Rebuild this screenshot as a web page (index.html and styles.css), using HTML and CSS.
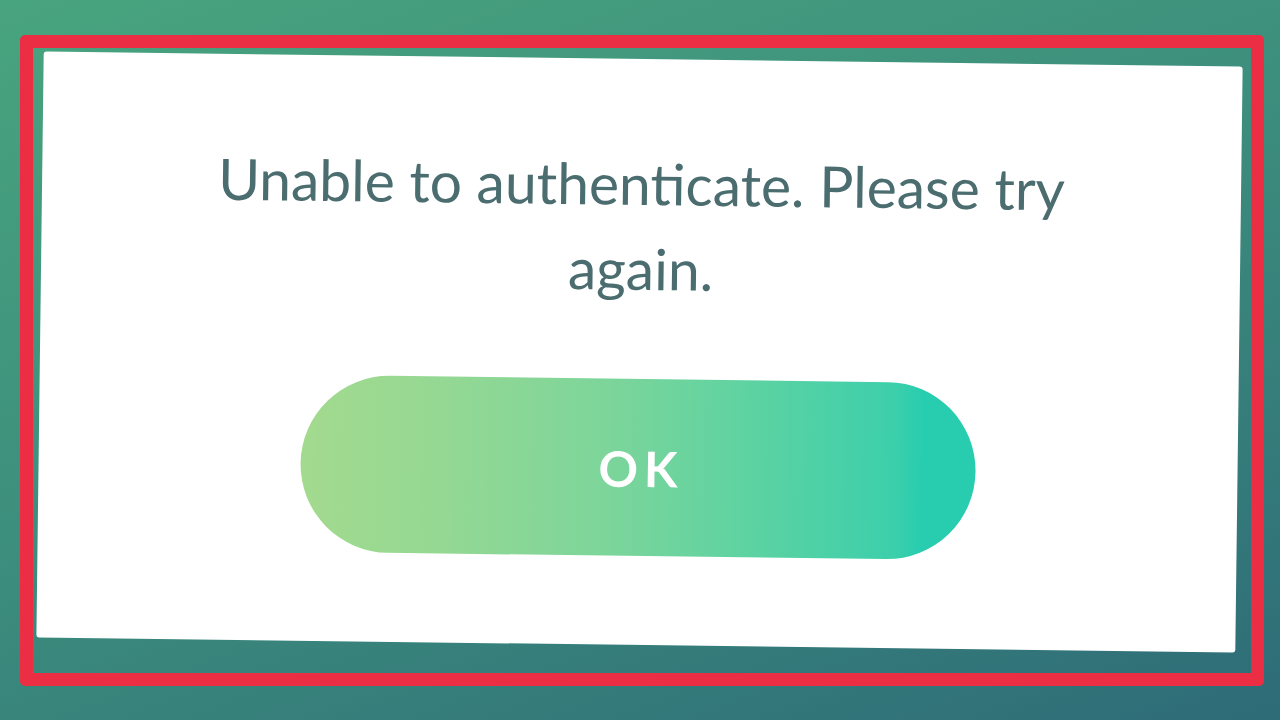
FILE: index.html
```html
<!DOCTYPE html>
<html>
<head>
<meta charset="utf-8">
<link rel="stylesheet" href="styles.css">
</head>
<body>
<div class="frame">
  <div class="card">
    <p class="message">Unable to authenticate. Please try again.</p>
    <div class="ok-btn">OK</div>
  </div>
</div>
</body>
</html>
```

FILE: styles.css
```css
html, body {
  margin: 0;
  padding: 0;
  width: 1280px;
  height: 720px;
  overflow: hidden;
}
body {
  background: linear-gradient(160deg, #48a47e 0%, #3d8f7d 45%, #2e6c78 100%);
  font-family: Lato, "Noto Sans", sans-serif;
  padding-top: 35px;
  padding-left: 20px;
  box-sizing: border-box;
}
.frame {
  width: 1244px;
  height: 651px;
  box-sizing: border-box;
  border: 13px solid #ec2e45;
  border-radius: 5px;
  padding: 11px 0 0 7px;
}
.card {
  width: 1199px;
  height: 586px;
  background: #ffffff;
  border-radius: 3px;
  transform: rotate(0.72deg);
  display: flex;
  flex-direction: column;
  align-items: center;
  box-sizing: border-box;
  padding-top: 82px;
}
.message {
  margin: 0;
  width: 900px;
  text-align: center;
  font-size: 57px;
  line-height: 85px;
  color: #4b6d6f;
  font-weight: 400;
}
.ok-btn {
  margin-top: 68px;
  width: 675px;
  height: 177px;
  border-radius: 89px;
  background: linear-gradient(to right, #a3da8e 0%, #95d893 20%, #7dd59a 45%, #58d2a3 70%, #3ccfab 88%, #28cdb0 92%, #28cdb0 100%);
  color: #ffffff;
  font-size: 49px;
  font-weight: 700;
  letter-spacing: 6px;
  display: flex;
  align-items: center;
  justify-content: center;
  padding-left: 6px;
  box-sizing: border-box;
}
```
